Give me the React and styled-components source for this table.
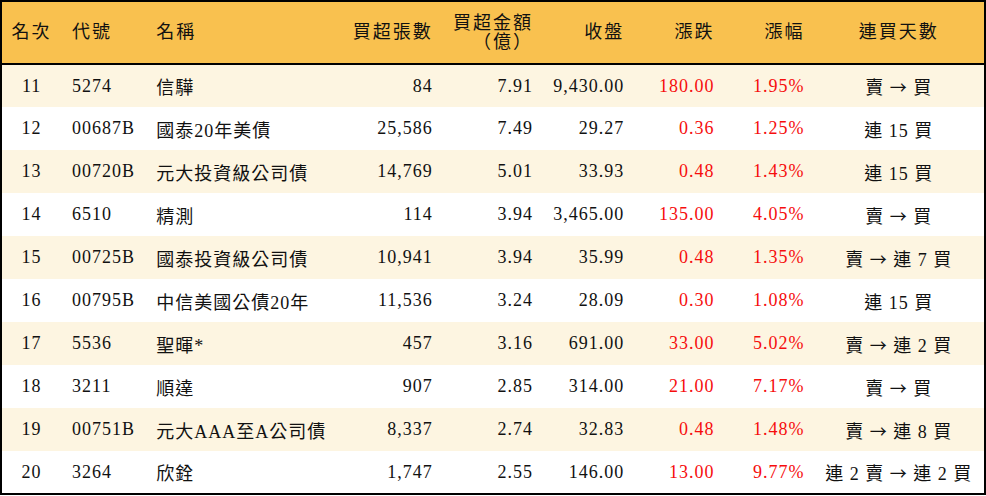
import React from "react";
import styled, { createGlobalStyle } from "styled-components";

const GlobalStyle = createGlobalStyle`
  html, body {
    margin: 0;
    padding: 0;
    background: #ffffff;
  }
`;

const rows = [
  ["11", "5274", "信驊", "84", "7.91", "9,430.00", "180.00", "1.95%", "賣 → 買"],
  ["12", "00687B", "國泰20年美債", "25,586", "7.49", "29.27", "0.36", "1.25%", "連 15 買"],
  ["13", "00720B", "元大投資級公司債", "14,769", "5.01", "33.93", "0.48", "1.43%", "連 15 買"],
  ["14", "6510", "精測", "114", "3.94", "3,465.00", "135.00", "4.05%", "賣 → 買"],
  ["15", "00725B", "國泰投資級公司債", "10,941", "3.94", "35.99", "0.48", "1.35%", "賣 → 連 7 買"],
  ["16", "00795B", "中信美國公債20年", "11,536", "3.24", "28.09", "0.30", "1.08%", "連 15 買"],
  ["17", "5536", "聖暉*", "457", "3.16", "691.00", "33.00", "5.02%", "賣 → 連 2 買"],
  ["18", "3211", "順達", "907", "2.85", "314.00", "21.00", "7.17%", "賣 → 買"],
  ["19", "00751B", "元大AAA至A公司債", "8,337", "2.74", "32.83", "0.48", "1.48%", "賣 → 連 8 買"],
  ["20", "3264", "欣銓", "1,747", "2.55", "146.00", "13.00", "9.77%", "連 2 賣 → 連 2 買"],
];

const columns = [
  { width: 60, align: "center", pad: "0" },
  { width: 84, align: "left", pad: "0 0 0 11px" },
  { width: 196, align: "left", pad: "0 0 0 11px" },
  { width: 100, align: "right", pad: "0 9px 0 0" },
  { width: 100, align: "right", pad: "0 9px 0 0" },
  { width: 91, align: "right", pad: "0 9px 0 0" },
  { width: 90, align: "right", pad: "0 9px 0 0" },
  { width: 90, align: "right", pad: "0 9px 0 0" },
  { width: 171, align: "center", pad: "0" },
];

const Table = styled.table`
  width: 986px;
  border-collapse: collapse;
  border: 2px solid #000;
  table-layout: fixed;
  font-family: "Liberation Serif", "Noto Sans CJK TC", serif;
  font-size: 18px;
  letter-spacing: 1px;
  color: #111;
`;

const HeadRow = styled.tr`
  background: #f9c14f;
  height: 63px;
  border-bottom: 2px solid #000;
`;

const Th = styled.th`
  font-weight: normal;
  text-align: ${(p) => p.$align};
  padding: ${(p) => p.$pad};
  line-height: 19px;
  vertical-align: middle;
  letter-spacing: 2px;
`;

const Row = styled.tr`
  height: 43px;
  background: ${(p) => (p.$odd ? "#fdf5e1" : "#ffffff")};
`;

const Td = styled.td`
  text-align: ${(p) => p.$align};
  padding: ${(p) => p.$pad};
  color: ${(p) => (p.$red ? "#f60d0d" : "#111")};
  white-space: nowrap;
  vertical-align: middle;
`;

const Arrow = styled.span`
  font-family: "Noto Sans CJK TC", sans-serif;
  font-size: 17px;
`;

const headers = ["名次", "代號", "名稱", "買超張數", null, "收盤", "漲跌", "漲幅", "連買天數"];

function Days({ text }) {
  const parts = text.split("→");
  if (parts.length === 1) return text;
  return (
    <>
      {parts[0]}
      <Arrow>→</Arrow>
      {parts[1]}
    </>
  );
}

export default function App() {
  return (
    <>
      <GlobalStyle />
      <Table>
        <colgroup>
          {columns.map((c, i) => (
            <col key={i} style={{ width: c.width }} />
          ))}
        </colgroup>
        <thead>
          <HeadRow>
            {headers.map((h, i) => (
              <Th key={i} $align={columns[i].align} $pad={columns[i].pad}>
                {h === null ? (
                  <>
                    買超金額
                    <br />
                    （億）
                  </>
                ) : (
                  h
                )}
              </Th>
            ))}
          </HeadRow>
        </thead>
        <tbody>
          {rows.map((r, ri) => (
            <Row key={r[0]} $odd={ri % 2 === 0}>
              {r.map((cell, ci) => (
                <Td
                  key={ci}
                  $align={columns[ci].align}
                  $pad={columns[ci].pad}
                  $red={ci === 6 || ci === 7}
                >
                  {ci === 8 ? <Days text={cell} /> : cell}
                </Td>
              ))}
            </Row>
          ))}
        </tbody>
      </Table>
    </>
  );
}
